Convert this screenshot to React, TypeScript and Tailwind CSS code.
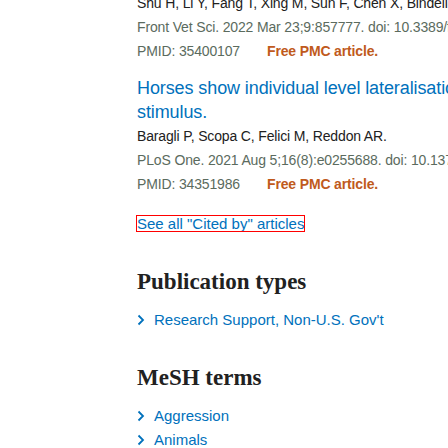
function Chevron() {
  return (
    <svg width="8" height="12" viewBox="0 0 8 12" className="shrink-0">
      <path d="M1.5 1.5 L6 6 L1.5 10.5" fill="none" stroke="#0071bc" strokeWidth="1.8" />
    </svg>
  );
}

function Citation({ authors, journal, pmid }: { authors: string; journal: string; pmid: string }) {
  return (
    <div className="text-[14px] leading-[24px] tracking-[-0.15px] whitespace-nowrap">
      <div className="text-[#212121]">{authors}</div>
      <div className="text-[#5b6b5e]">{journal}</div>
      <div className="flex">
        <span className="text-[#5b6b5e] w-[130px]">PMID: {pmid}</span>
        <span className="text-[#c05a1c] font-semibold">Free PMC article.</span>
      </div>
    </div>
  );
}

export default function App() {
  const pubTypes = ["Research Support, Non-U.S. Gov't"];
  const mesh = ["Aggression", "Animals"];

  return (
    <div className="w-[448px] h-[448px] overflow-hidden bg-white font-['Liberation_Sans',sans-serif]">
      <div className="pl-[137px] w-[900px] -mt-[9px]">
        <Citation
          authors="Shu H, Li Y, Fang T, Xing M, Sun F, Chen X, Bindelle J, Wang C, Hu X."
          journal="Front Vet Sci. 2022 Mar 23;9:857777. doi: 10.3389/fvets.2022.857777. eCollection 2022."
          pmid="35400107"
        />

        <div className="mt-[13px] text-[18px] leading-[24px] tracking-[-0.1px] text-[#0071bc]">
          <div className="whitespace-nowrap">
            Horses show individual level lateralisation when inspecting an unfamiliar and unexpected
          </div>
          <div>stimulus.</div>
        </div>
        <Citation
          authors="Baragli P, Scopa C, Felici M, Reddon AR."
          journal="PLoS One. 2021 Aug 5;16(8):e0255688. doi: 10.1371/journal.pone.0255688. eCollection 2021."
          pmid="34351986"
        />

        <div className="mt-[16px] text-[15px] leading-[24px]">
          <span className="inline-block leading-[15px] outline-1 outline-solid outline-[#ff0000] text-[#0071bc]">
            See all "Cited by" articles
          </span>
        </div>

        <h2 className="mt-[32px] font-['Liberation_Serif',serif] font-bold text-[23px] leading-[28px] text-[#212121]">
          Publication types
        </h2>
        <ul className="mt-[12px] text-[15px] leading-[24px] text-[#0071bc]">
          {pubTypes.map((t) => (
            <li key={t} className="flex items-center gap-[9px]">
              <Chevron />
              <span>{t}</span>
            </li>
          ))}
        </ul>

        <h2 className="mt-[32px] font-['Liberation_Serif',serif] font-bold text-[23px] leading-[28px] text-[#212121]">
          MeSH terms
        </h2>
        <ul className="mt-[12px] text-[15px] leading-[24px] text-[#0071bc]">
          {mesh.map((t) => (
            <li key={t} className="flex items-center gap-[9px]">
              <Chevron />
              <span>{t}</span>
            </li>
          ))}
        </ul>
      </div>
    </div>
  );
}
